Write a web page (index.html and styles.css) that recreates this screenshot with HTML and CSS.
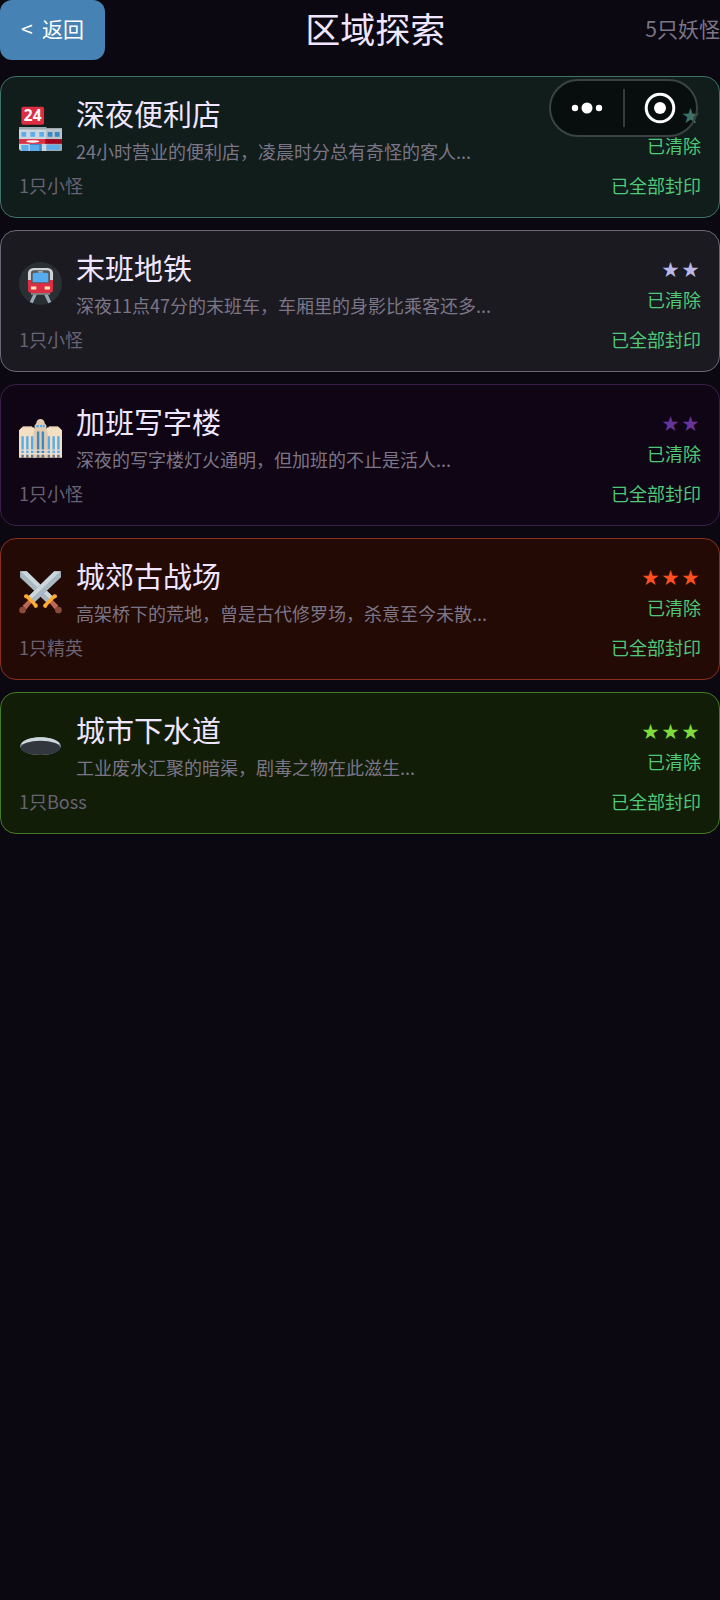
FILE: index.html
```html
<!DOCTYPE html>
<html lang="zh-CN">
<head>
  <meta charset="UTF-8">
  <meta name="viewport" content="width=device-width, initial-scale=1">
  <title>区域探索</title>
  <link rel="stylesheet" href="styles.css">
</head>
<body>

  <header class="topbar">
    <button type="button" class="back-btn">&lt;&nbsp; 返回</button>
    <h1>区域探索</h1>
    <span class="total">5只妖怪</span>
  </header>

  <main class="areas">

    <article class="area store">
      <div class="area-main">
        <svg class="icon" viewBox="0 0 36 36" aria-hidden="true">
          <rect fill="#dd2e44" x="2" y="-1" width="19" height="15" rx="1.5"/>
          <text class="sign" x="11.5" y="11">24</text>
          <path fill="#ccd6dd" d="M0 17h36v17a2 2 0 0 1-2 2H2a2 2 0 0 1-2-2z"/>
          <path fill="#99aab5" d="M0 16h23v2H0zM23 18h13v17a1 1 0 0 1-1 1H23z"/>
          <path fill="#b8c5cd" d="M23 18h13v8H23z"/>
          <path fill="#5dadec" d="M2 20h4v4H2zM9.5 20h4v4h-4zM17 20h4v4h-4zM2 31h6v5H2zM9 30h10v6H9zM23 31h11v4H23z"/>
          <path fill="#3b88c3" d="M24 20h4v4h-4zM30 20h4v4h-4zM9 30h10v1H9zM17 31h2v5h-2z"/>
          <path fill="#dd2e44" d="M0 26h23v4H0z"/>
          <path fill="#a0041e" d="M22 26h14v4H22z"/>
          <ellipse fill="#fff" cx="11.5" cy="28" rx="5.5" ry="1"/>
        </svg>
        <div class="area-text">
          <h2>深夜便利店</h2>
          <p>24小时营业的便利店，凌晨时分总有奇怪的客人...</p>
        </div>
        <div class="area-state">
          <div class="stars"><span>★</span></div>
          <span class="done">已清除</span>
        </div>
      </div>
      <div class="area-foot">
        <span>1只小怪</span>
        <span class="done">已全部封印</span>
      </div>
    </article>

    <article class="area subway">
      <div class="area-main">
        <svg class="icon" viewBox="0 0 36 36" aria-hidden="true">
          <circle fill="#292f33" cx="18" cy="18" r="18"/>
          <path fill="#99aab5" d="M12 27h3l-3.500 7.500-2.500-1zM21 27h3l3 6.500-2.500 1z"/>
          <path fill="#808285" d="M10 25.500h16v2H10z"/>
          <path fill="#dd2e44" d="M7.500 14h21v9a3 3 0 0 1-3 3h-15a3 3 0 0 1-3-3z"/>
          <path fill="#d1d3d4" d="M12 5h12a4.500 4.500 0 0 1 4.500 4.500V15h-21V9.500A4.500 4.500 0 0 1 12 5z"/>
          <path fill="#58595b" d="M12.500 7h11A2.500 2.500 0 0 1 26 9.500V18H10V9.500A2.500 2.500 0 0 1 12.500 7z"/>
          <path fill="#dd2e44" d="M7.500 15H10v3h16v-3h2.500v4h-21z"/>
          <path fill="#55acee" d="M13 9h10a1.500 1.500 0 0 1 1.500 1.500V17h-13v-6.500A1.500 1.500 0 0 1 13 9z"/>
          <path fill="#99aab5" d="M16 7.500h4V9h-4z"/>
          <path fill="#ffe8b6" d="M10 20.500h4.500V23H10zM21.500 20.500H26V23h-4.500z"/>
        </svg>
        <div class="area-text">
          <h2>末班地铁</h2>
          <p>深夜11点47分的末班车，车厢里的身影比乘客还多...</p>
        </div>
        <div class="area-state">
          <div class="stars"><span>★</span><span>★</span></div>
          <span class="done">已清除</span>
        </div>
      </div>
      <div class="area-foot">
        <span>1只小怪</span>
        <span class="done">已全部封印</span>
      </div>
    </article>

    <article class="area office">
      <div class="area-main">
        <svg class="icon" viewBox="0 0 36 36" aria-hidden="true">
          <path fill="#d9b99a" d="M3 8.500h8v3H3zM25 8.500h8v3h-8z"/>
          <path fill="#f3dfc1" d="M0 12l2.500-2.500H12l2 2V35H0zM22 11.500l2-2h9.500L36 12v23H22z"/>
          <path fill="#e0cbb0" d="M14.500 6c0-2 1.500-3.500 3.500-3.500S21.500 4 21.500 6L23 8v4l1 2v21H12V14l1-2V8z"/>
          <path fill="#55acee" d="M14.500 7.500h2v2h-2zM17.500 7.500h2v2h-2zM20 7.500h1.500v2H20zM2 17h2v15H2zM6 17h2v15H6zM10 17h2v15h-2zM24 17h2v15h-2zM28 17h2v15h-2zM32 17h2v15h-2z"/>
          <path fill="#3b88c3" d="M15 13h2v19h-2zM19 13h2v19h-2z"/>
          <path fill="#e6e0d6" d="M0 28h36v1H0zM0 31h36v1.500H0z"/>
          <path fill="#66757f" d="M2 32.500h2V35H2zM6 32.500h2V35H6zM10 32.500h2V35h-2zM15 32.500h2V35h-2zM19 32.500h2V35h-2zM24 32.500h2V35h-2zM28 32.500h2V35h-2zM32 32.500h2V35h-2z"/>
        </svg>
        <div class="area-text">
          <h2>加班写字楼</h2>
          <p>深夜的写字楼灯火通明，但加班的不止是活人...</p>
        </div>
        <div class="area-state">
          <div class="stars"><span>★</span><span>★</span></div>
          <span class="done">已清除</span>
        </div>
      </div>
      <div class="area-foot">
        <span>1只小怪</span>
        <span class="done">已全部封印</span>
      </div>
    </article>

    <article class="area battlefield">
      <div class="area-main">
        <svg class="icon" viewBox="0 0 36 36" aria-hidden="true">
          <defs>
            <g id="sword">
              <path fill="#8899a6" d="M1 1h5.500L28 22l-5 5L1 6z"/>
              <path fill="#ccd6dd" d="M6.500 1L28 22l-2.500 2.500L1 1z"/>
              <path fill="#aab8c2" d="M1 1l24.500 23.500L23 27 1 6z"/>
              <path fill="#bf6952" d="M25.500 27.500l2.500-2.500 5 5-3 3z"/>
              <path fill="#ffac33" d="M28.500 21c1-1 3 .5 2 2L23 30.500c-1 1-3-.5-2-2z"/>
              <circle fill="#ffac33" cx="30" cy="22" r="1.800"/>
              <circle fill="#ffac33" cx="22" cy="30" r="1.800"/>
              <circle fill="#8a4b38" cx="33" cy="33.500" r="2.800"/>
            </g>
          </defs>
          <use href="#sword"/>
          <use href="#sword" transform="matrix(-1 0 0 1 36 0)"/>
        </svg>
        <div class="area-text">
          <h2>城郊古战场</h2>
          <p>高架桥下的荒地，曾是古代修罗场，杀意至今未散...</p>
        </div>
        <div class="area-state">
          <div class="stars"><span>★</span><span>★</span><span>★</span></div>
          <span class="done">已清除</span>
        </div>
      </div>
      <div class="area-foot">
        <span>1只精英</span>
        <span class="done">已全部封印</span>
      </div>
    </article>

    <article class="area sewer">
      <div class="area-main">
        <svg class="icon" viewBox="0 0 36 36" aria-hidden="true">
          <ellipse fill="#8899a6" cx="18" cy="18.500" rx="17" ry="7.500"/>
          <path fill="#ccd6dd" d="M2 16.500C4 13 10 11 18 11s14 2 16 5.500c-3 2-29 2-32 0z"/>
          <ellipse fill="#31373d" cx="18" cy="20" rx="16.500" ry="6"/>
        </svg>
        <div class="area-text">
          <h2>城市下水道</h2>
          <p>工业废水汇聚的暗渠，剧毒之物在此滋生...</p>
        </div>
        <div class="area-state">
          <div class="stars"><span>★</span><span>★</span><span>★</span></div>
          <span class="done">已清除</span>
        </div>
      </div>
      <div class="area-foot">
        <span>1只Boss</span>
        <span class="done">已全部封印</span>
      </div>
    </article>

  </main>

  <!-- floating mini-program capsule -->
  <div class="capsule">
    <button type="button" aria-label="更多">
      <svg width="34" height="14" viewBox="0 0 34 14">
        <circle cx="5" cy="7" r="3.200"/>
        <circle cx="17" cy="7" r="5.500"/>
        <circle cx="29" cy="7" r="3.200"/>
      </svg>
    </button>
    <span class="divider"></span>
    <button type="button" aria-label="关闭">
      <svg width="32" height="32" viewBox="0 0 32 32">
        <circle class="ring" cx="16" cy="16" r="13.800"/>
        <circle cx="16" cy="16" r="6"/>
      </svg>
    </button>
  </div>

</body>
</html>
```

FILE: styles.css
```css
:root {
  --bg: #0b0812;
  --text: #f0e6ff;
  --muted: #7c7586;
  --dim: #696273;
  --green: #4fc878;
  --radius: 16px;
}
*, *::before, *::after { box-sizing: border-box; margin: 0; padding: 0; }
body {
  min-height: 100vh;
  background: var(--bg);
  color: var(--text);
  font-family: 'Noto Sans CJK SC', sans-serif;
  font-size: 18px;
  line-height: 26px;
}
button {
  border: none;
  font-family: inherit;
  cursor: pointer;
}
h1, h2 { font-weight: 400; }

/* top bar */
.topbar {
  display: flex;
  justify-content: space-between;
  align-items: center;
  margin-bottom: 16px;
}
.topbar h1 {
  padding-bottom: 4px;
  font-size: 35px;
  line-height: 56px;
}
.back-btn {
  height: 60px;
  padding: 0 21px 4px;
  border-radius: 12px;
  background: #4682b4;
  color: #fff;
  font-size: 21px;
}
.total {
  padding-bottom: 4px;
  color: var(--muted);
  font-size: 21px;
}

/* area cards */
.areas {
  display: flex;
  flex-direction: column;
  gap: 12px;
}
.area {
  padding: 18px 18px 19px;
  border: 1px solid;
  border-radius: var(--radius);
}
.area-main {
  display: flex;
  align-items: center;
  gap: 14px;
}
.icon {
  flex: none;
  width: 43px;
  height: 43px;
  overflow: visible;
}
.sign {
  fill: #fff;
  font-family: 'Open Sans', sans-serif;
  font-size: 13px;
  font-weight: 700;
  text-anchor: middle;
}
.area-text {
  flex: 1;
  min-width: 0;
}
.area-text h2 {
  font-size: 29px;
  line-height: 36px;
  margin-bottom: 7px;
}
.area-text p { color: var(--muted); }
.area-state {
  display: flex;
  flex-direction: column;
  align-items: flex-end;
  gap: 4px;
}
.stars {
  display: flex;
  gap: 3px;
  padding-right: 2px;
  font-size: 17px;
}
.area-foot {
  display: flex;
  justify-content: space-between;
  margin-top: 8px;
  color: var(--dim);
}
.done { color: var(--green); }

.store { background: #101d1b; border-color: #3f7268; }
.store .stars { color: #7fe0cc; }
.subway { background: #1b1a20; border-color: #6b6877; }
.subway .stars { color: #b8b8e6; }
.office { background: #0f0514; border-color: #392049; }
.office .stars { color: #663399; }
.battlefield { background: #230a04; border-color: #8a3020; }
.battlefield .stars { color: #ff4f20; }
.sewer { background: #121d07; border-color: #457a28; }
.sewer .stars { color: #7ddc3c; }

/* capsule */
.capsule {
  position: fixed;
  top: 79px;
  right: 22px;
  display: flex;
  align-items: center;
  width: 149px;
  height: 58px;
  border: 2px solid #3a4342;
  border-radius: 29px;
  background: rgba(0,0,0,0.5);
}
.capsule button {
  flex: 1;
  display: flex;
  align-items: center;
  justify-content: center;
  background: none;
}
.divider {
  width: 2px;
  height: 38px;
  background: #343c3b;
}
.capsule svg { fill: #fff; }
.capsule .ring {
  fill: none;
  stroke: #fff;
  stroke-width: 3;
}
```
